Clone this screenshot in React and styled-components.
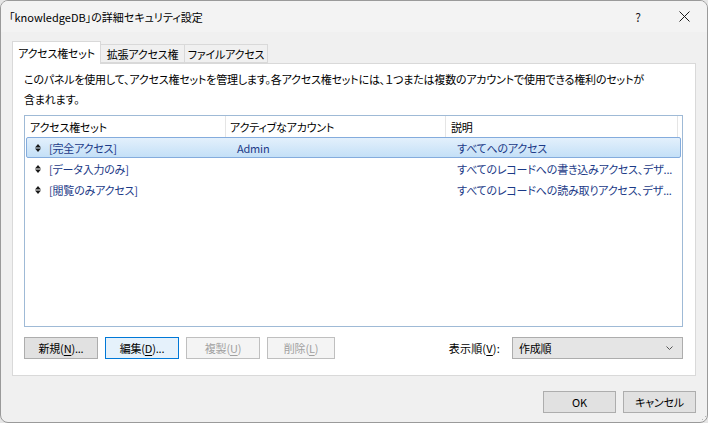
import React from "react";
import styled, { createGlobalStyle } from "styled-components";

const GlobalStyle = createGlobalStyle`
  html, body {
    margin: 0;
    padding: 0;
    background: #e6e6e6;
  }
  * { box-sizing: border-box; }
`;

const Window = styled.div`
  width: 708px;
  height: 423px;
  display: flex;
  flex-direction: column;
  background: #f0f0f0;
  border: 1px solid #9a9a9a;
  border-radius: 8px;
  overflow: hidden;
  font-family: "Noto Sans CJK JP", "Noto Sans", sans-serif;
  font-feature-settings: "palt";
  font-size: 11px;
  letter-spacing: -0.2px;
  color: #000;
`;

const TitleBar = styled.div`
  height: 31px;
  display: flex;
  align-items: center;
  padding-left: 8px;
  background: #f3f3f3;
`;

const Title = styled.div`
  flex: 1;
  font-size: 11px;
  letter-spacing: 0;
`;

const CaptionButton = styled.div`
  width: 46px;
  height: 31px;
  display: flex;
  align-items: center;
  justify-content: center;
  font-size: 12px;
  color: #1a1a1a;
`;

const Body = styled.div`
  flex: 1;
  display: flex;
  flex-direction: column;
  padding: 9px 11px 0 11px;
`;

const TabStrip = styled.div`
  display: flex;
  align-items: flex-end;
  height: 22px;
  position: relative;
  z-index: 1;
`;

const Tab = styled.div`
  width: ${({ w }) => w}px;
  height: ${({ active }) => (active ? "23px" : "19px")};
  margin-bottom: ${({ active }) => (active ? "-1px" : "0")};
  margin-left: ${({ active }) => (active ? "0" : "-1px")};
  display: flex;
  align-items: center;
  justify-content: center;
  background: ${({ active }) => (active ? "#fff" : "#f0f0f0")};
  border: 1px solid #d9d9d9;
  border-bottom: ${({ active }) => (active ? "none" : "1px solid #d9d9d9")};
  white-space: nowrap;
  &:first-child { margin-left: 0; }
`;

const Panel = styled.div`
  height: 313px;
  background: #fff;
  border: 1px solid #d9d9d9;
  padding: 5px 12px 0 11px;
  display: flex;
  flex-direction: column;
`;

const Description = styled.p`
  margin: 0;
  line-height: 20px;
  white-space: nowrap;
`;

const ListBox = styled.div`
  margin-top: 6px;
  height: 212px;
  width: 659px;
  border: 1px solid #9fbad6;
  background: #fff;
  padding: 0 1px;
`;

const HeaderRow = styled.div`
  display: flex;
  height: 21px;
`;

const HeaderCell = styled.div`
  width: ${({ w }) => w}px;
  padding-left: ${({ pad }) => pad}px;
  display: flex;
  align-items: center;
  border-right: 1px solid #e5e5e5;
`;

const Row = styled.div`
  display: flex;
  align-items: center;
  height: 21px;
  width: 655px;
  color: #1b3a87;
  border: 1px solid ${({ selected }) => (selected ? "#84acdd" : "transparent")};
  border-radius: 2px;
  background: ${({ selected }) =>
    selected ? "linear-gradient(#e3f0fc, #c4e0f7)" : "transparent"};
`;

const Cell = styled.div`
  width: ${({ w }) => w}px;
  padding-left: ${({ pad }) => pad}px;
  display: flex;
  align-items: center;
  white-space: nowrap;
  overflow: hidden;
`;

const SortIcon = styled.svg`
  width: 6px;
  height: 8px;
  margin-right: 8px;
  flex-shrink: 0;
`;

const ButtonRow = styled.div`
  display: flex;
  align-items: center;
  margin-top: 10px;
  gap: 7px;
  width: 659px;
`;

const Button = styled.div`
  width: ${({ w }) => w || 74}px;
  height: 22px;
  display: flex;
  align-items: center;
  justify-content: center;
  background: ${({ focus, disabled }) =>
    disabled ? "#f4f4f4" : focus ? "#e5f1fb" : "#e1e1e1"};
  border: 1px solid
    ${({ focus, disabled }) => (disabled ? "#bfbfbf" : focus ? "#0078d7" : "#adadad")};
  color: ${({ disabled }) => (disabled ? "#a0a0a0" : "#000")};
  white-space: nowrap;
  u { text-decoration: underline; text-underline-offset: 2px; }
`;

const Spacer = styled.div`
  flex: 1;
`;

const SortLabel = styled.div`
  margin-right: 5px;
  letter-spacing: 0.2px;
  u { text-decoration: underline; text-underline-offset: 2px; }
`;

const Select = styled.div`
  width: 171px;
  height: 22px;
  border: 1px solid #adadad;
  background: #e5e5e5;
  display: flex;
  align-items: center;
  padding: 0 9px 0 6px;
  justify-content: space-between;
`;

const Footer = styled.div`
  display: flex;
  justify-content: flex-end;
  gap: 7px;
  margin-top: 15px;
  position: relative;
`;

const Grip = styled.svg`
  position: absolute;
  right: -11px;
  bottom: -11px;
  width: 10px;
  height: 10px;
`;

const cols = [200, 220, 232];

const rows = [
  { name: "[完全アクセス]", account: "Admin", desc: "すべてへのアクセス", selected: true },
  { name: "[データ入力のみ]", account: "", desc: "すべてのレコードへの書き込みアクセス、デザ..." },
  { name: "[閲覧のみアクセス]", account: "", desc: "すべてのレコードへの読み取りアクセス、デザ..." },
];

function UpDown() {
  return (
    <SortIcon viewBox="0 0 6 8">
      <path d="M3 0 L6 3.4 L0 3.4 Z M0 4.6 L6 4.6 L3 8 Z" fill="#1a1a1a" />
    </SortIcon>
  );
}

export default function App() {
  return (
    <>
      <GlobalStyle />
      <Window>
        <TitleBar>
          <Title>「knowledgeDB」の詳細セキュリティ設定</Title>
          <CaptionButton>?</CaptionButton>
          <CaptionButton>
            <svg width="11" height="11" viewBox="0 0 11 11">
              <path d="M0.5 0.5 L10.5 10.5 M10.5 0.5 L0.5 10.5" stroke="#1a1a1a" strokeWidth="1" />
            </svg>
          </CaptionButton>
        </TitleBar>
        <Body>
          <TabStrip>
            <Tab active w={89}>アクセス権セット</Tab>
            <Tab w={85}>拡張アクセス権</Tab>
            <Tab w={84}>ファイルアクセス</Tab>
          </TabStrip>
          <Panel>
            <Description>
              このパネルを使用して、アクセス権セットを管理します。各アクセス権セットには、１つまたは複数のアカウントで使用できる権利のセットが
              <br />
              含まれます。
            </Description>
            <ListBox>
              <HeaderRow>
                <HeaderCell w={cols[0]} pad={4}>アクセス権セット</HeaderCell>
                <HeaderCell w={cols[1]} pad={4}>アクティブなアカウント</HeaderCell>
                <HeaderCell w={cols[2]} pad={5}>説明</HeaderCell>
              </HeaderRow>
              {rows.map((r) => (
                <Row key={r.name} selected={r.selected}>
                  <Cell w={cols[0]} pad={8}>
                    <UpDown />
                    {r.name}
                  </Cell>
                  <Cell w={cols[1]} pad={10}>{r.account}</Cell>
                  <Cell w={cols[2]} pad={10}>{r.desc}</Cell>
                </Row>
              ))}
            </ListBox>
            <ButtonRow>
              <Button>新規(<u>N</u>)...</Button>
              <Button focus>編集(<u>D</u>)...</Button>
              <Button disabled>複製(<u>U</u>)</Button>
              <Button disabled w={68}>削除(<u>L</u>)</Button>
              <Spacer />
              <SortLabel>表示順(<u>V</u>):</SortLabel>
              <Select>
                <span>作成順</span>
                <svg width="7" height="4" viewBox="0 0 7 4">
                  <path d="M0.5 0.5 L3.5 3.5 L6.5 0.5" stroke="#555" fill="none" />
                </svg>
              </Select>
            </ButtonRow>
          </Panel>
          <Footer>
            <Button w={73}>OK</Button>
            <Button w={73}>キャンセル</Button>
            <Grip viewBox="0 0 10 10">
              {[[8, 2], [5, 5], [8, 5], [2, 8], [5, 8], [8, 8]].map(([x, y]) => (
                <rect key={`${x}-${y}`} x={x} y={y} width="1" height="1" fill="#b5b5b5" />
              ))}
            </Grip>
          </Footer>
        </Body>
      </Window>
    </>
  );
}
